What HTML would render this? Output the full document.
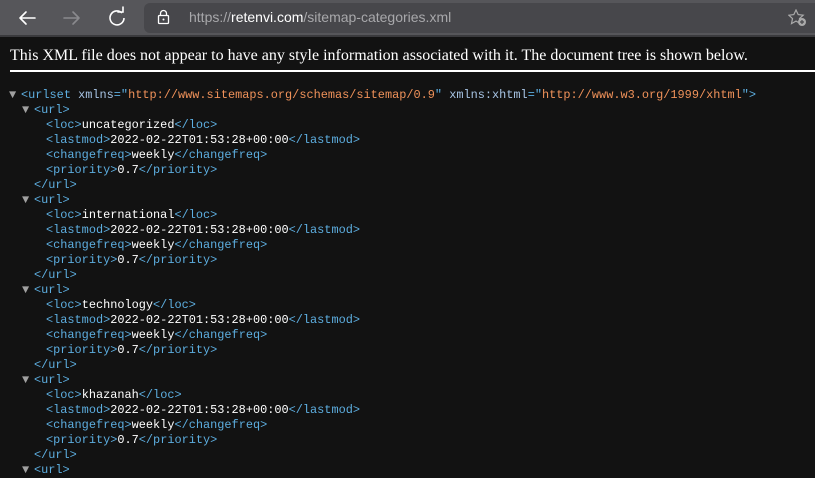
<!DOCTYPE html>
<html><head><style>
body{margin:0;width:815px;height:465px;overflow:hidden;background:#121212;}
.bar{position:absolute;left:0;top:0;width:815px;height:35px;background:#56565a;border-bottom:2px solid #3a3a3d;}
.url{position:absolute;left:144px;top:3px;width:671px;height:30px;background:#47474b;border-radius:6px 0 0 6px;}
.urltext{position:absolute;left:189px;top:9px;font:14px "Liberation Sans",sans-serif;color:#a8a8ab;}
.urltext b{font-weight:normal;color:#fff;}
.msg{position:absolute;left:10px;top:47px;font:16px "Liberation Serif",serif;color:#fff;white-space:nowrap;}
.hr{position:absolute;left:10px;top:70px;width:805px;height:2px;background:#fff;}
.x{position:absolute;left:0;top:88px;font:11.9px/15px "Liberation Mono",monospace;color:#fff;}
.x div{height:15px;position:relative;white-space:pre}
.l0{padding-left:21px}.l1{padding-left:34px}.l2{padding-left:46px}
.g{color:#a0a0a0;position:absolute;font-size:12px;margin-left:-12px}
.t{color:#5daee0}.a{color:#a7c4e4}.v{color:#f0925a}
</style></head><body>
<div class="bar"></div>
<svg style="position:absolute;left:0;top:0" width="815" height="36">
<g stroke="#fff" stroke-width="1.6" fill="none" stroke-linecap="round">
<path d="M20 18h15M20 18l6-6M20 18l6 6"/>
</g>
<g stroke="#8a8a8e" stroke-width="1.6" fill="none" stroke-linecap="round">
<path d="M64 18h15M79 18l-6-6M79 18l-6 6"/>
</g>
<g stroke="#fff" stroke-width="1.6" fill="none">
<path d="M122 13a7 7 0 1 0 2 5"/><path d="M118 12h5v-5" stroke-linecap="round"/>
</g>
</svg>
<div class="url"></div>
<svg style="position:absolute;left:157px;top:9px" width="14" height="16"><rect x="1.5" y="6.5" width="10" height="8" rx="1" fill="none" stroke="#fff" stroke-width="1.3"/><path d="M3.5 6.5v-2a3 3 0 0 1 6 0v2" fill="none" stroke="#fff" stroke-width="1.3"/><circle cx="6.5" cy="10.5" r="1" fill="#fff"/></svg>
<div class="urltext">https://<b>retenvi.com</b>/sitemap-categories.xml</div>
<svg style="position:absolute;left:788px;top:9px" width="20" height="18"><path d="M8 1l2.2 4.6 5 .6-3.7 3.4 1 5-4.5-2.5-4.5 2.5 1-5L.8 6.2l5-.6z" fill="none" stroke="#aaa" stroke-width="1.2"/><circle cx="14" cy="13" r="4" fill="#aaa"/><path d="M14 11v4M12 13h4" stroke="#47474b" stroke-width="1.2"/></svg>
<div class="msg">This XML file does not appear to have any style information associated with it. The document tree is shown below.</div>
<div class="hr"></div>
<div class="x"><div class="l0"><span class="g">▼</span><span class="t">&lt;urlset </span><span class="a">xmlns</span><span class="t">="</span><span class="v">http://www.sitemaps.org/schemas/sitemap/0.9</span><span class="t">" </span><span class="a">xmlns:xhtml</span><span class="t">="</span><span class="v">http://www.w3.org/1999/xhtml</span><span class="t">"&gt;</span></div><div class="l1"><span class="g">▼</span><span class="t">&lt;url&gt;</span></div><div class="l2"><span class="t">&lt;loc&gt;</span>uncategorized<span class="t">&lt;/loc&gt;</span></div><div class="l2"><span class="t">&lt;lastmod&gt;</span>2022-02-22T01:53:28+00:00<span class="t">&lt;/lastmod&gt;</span></div><div class="l2"><span class="t">&lt;changefreq&gt;</span>weekly<span class="t">&lt;/changefreq&gt;</span></div><div class="l2"><span class="t">&lt;priority&gt;</span>0.7<span class="t">&lt;/priority&gt;</span></div><div class="l1"><span class="t">&lt;/url&gt;</span></div><div class="l1"><span class="g">▼</span><span class="t">&lt;url&gt;</span></div><div class="l2"><span class="t">&lt;loc&gt;</span>international<span class="t">&lt;/loc&gt;</span></div><div class="l2"><span class="t">&lt;lastmod&gt;</span>2022-02-22T01:53:28+00:00<span class="t">&lt;/lastmod&gt;</span></div><div class="l2"><span class="t">&lt;changefreq&gt;</span>weekly<span class="t">&lt;/changefreq&gt;</span></div><div class="l2"><span class="t">&lt;priority&gt;</span>0.7<span class="t">&lt;/priority&gt;</span></div><div class="l1"><span class="t">&lt;/url&gt;</span></div><div class="l1"><span class="g">▼</span><span class="t">&lt;url&gt;</span></div><div class="l2"><span class="t">&lt;loc&gt;</span>technology<span class="t">&lt;/loc&gt;</span></div><div class="l2"><span class="t">&lt;lastmod&gt;</span>2022-02-22T01:53:28+00:00<span class="t">&lt;/lastmod&gt;</span></div><div class="l2"><span class="t">&lt;changefreq&gt;</span>weekly<span class="t">&lt;/changefreq&gt;</span></div><div class="l2"><span class="t">&lt;priority&gt;</span>0.7<span class="t">&lt;/priority&gt;</span></div><div class="l1"><span class="t">&lt;/url&gt;</span></div><div class="l1"><span class="g">▼</span><span class="t">&lt;url&gt;</span></div><div class="l2"><span class="t">&lt;loc&gt;</span>khazanah<span class="t">&lt;/loc&gt;</span></div><div class="l2"><span class="t">&lt;lastmod&gt;</span>2022-02-22T01:53:28+00:00<span class="t">&lt;/lastmod&gt;</span></div><div class="l2"><span class="t">&lt;changefreq&gt;</span>weekly<span class="t">&lt;/changefreq&gt;</span></div><div class="l2"><span class="t">&lt;priority&gt;</span>0.7<span class="t">&lt;/priority&gt;</span></div><div class="l1"><span class="t">&lt;/url&gt;</span></div><div class="l1"><span class="g">▼</span><span class="t">&lt;url&gt;</span></div></div>
</body></html>
